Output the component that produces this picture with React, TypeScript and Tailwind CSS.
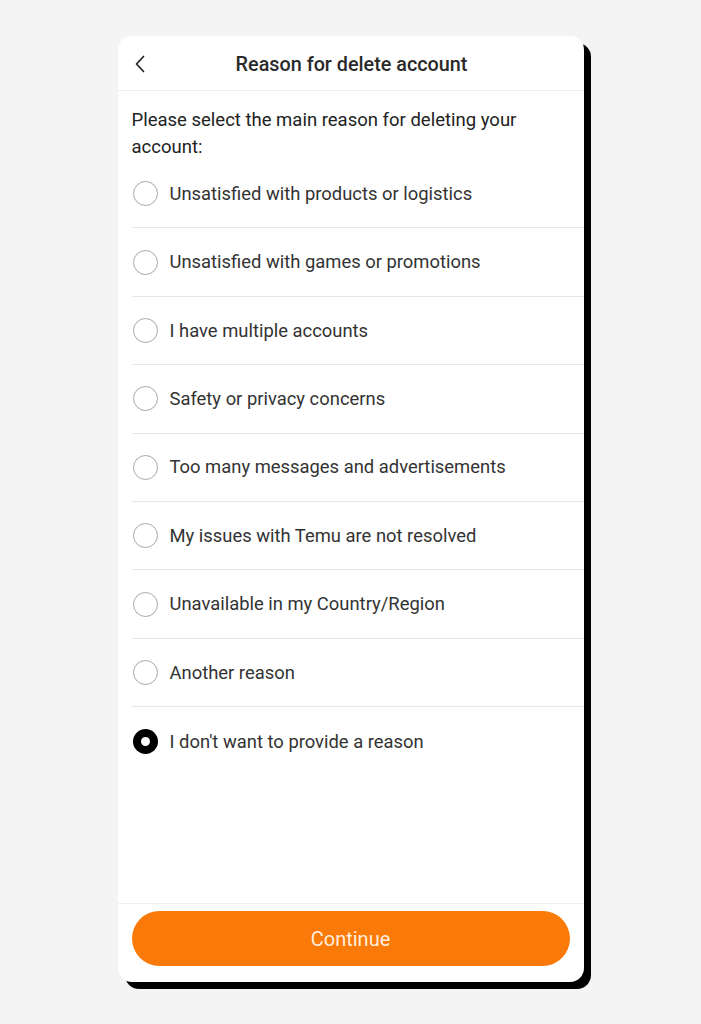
import React, { useState } from "react";

const reasons = [
    "Unsatisfied with products or logistics",
    "Unsatisfied with games or promotions",
    "I have multiple accounts",
    "Safety or privacy concerns",
    "Too many messages and advertisements",
    "My issues with Temu are not resolved",
    "Unavailable in my Country/Region",
    "Another reason",
    "I don't want to provide a reason",
];

const App = () => {
    const [selected, setSelected] = useState(reasons.length - 1);

    return <div className="min-h-screen bg-[#f4f4f4] pt-[36px] flex justify-center font-['Roboto',sans-serif]">
        <div className="w-[466px] h-[946px] rounded-[14px] bg-white shadow-[7px_7px_0_#000] flex flex-col overflow-hidden">
            {/* header */}
            <div className="relative h-[55px] flex items-center justify-center border-b border-[#ececec] pt-[3px]">
                <svg className="absolute left-[16px] top-[19px] w-[12px] h-[18px]" viewBox="0 0 12 18" fill="none">
                    <path d="M9.5 1.5 L2.5 9 L9.5 16.5" stroke="#222" strokeWidth="1.7" strokeLinecap="round" strokeLinejoin="round" />
                </svg>
                <h1 className="text-[19.8px] font-medium text-[#2a2a2a] leading-none pl-[2px]">Reason for delete account</h1>
            </div>

            {/* reasons */}
            <div className="flex-1 pl-[14px] pt-[16px]">
                <p className="text-[18.5px] leading-[27px] text-[#222] pr-[50px]">Please select the main reason for deleting your account:</p>
                <div className="-mt-[1px]">
                    {reasons.map((r, i) => (
                        <div
                            key={r}
                            onClick={() => setSelected(i)}
                            className={`h-[68.4px] flex items-center gap-[12px] cursor-pointer ${i < reasons.length - 1 ? "border-b border-[#e6e6e6]" : ""}`}
                        >
                            {selected === i
                                ? <span className="ml-[1px] w-[25px] h-[25px] rounded-full bg-black flex items-center justify-center shrink-0">
                                    <span className="w-[9px] h-[9px] rounded-full bg-white" />
                                </span>
                                : <span className="ml-[1px] w-[25px] h-[25px] rounded-full border-[1.5px] border-[#a8a8a8] shrink-0" />}
                            <span className="text-[18.4px] text-[#333]">{r}</span>
                        </div>
                    ))}
                </div>
            </div>

            {/* footer */}
            <div className="border-t border-[#f0f0f0] px-[14px] pt-[7px] pb-[16px]">
                <button className="w-full h-[55px] rounded-full bg-[#f97a08] text-[#ffeedd] text-[20px]">Continue</button>
            </div>
        </div>
    </div>
}

export default App;
